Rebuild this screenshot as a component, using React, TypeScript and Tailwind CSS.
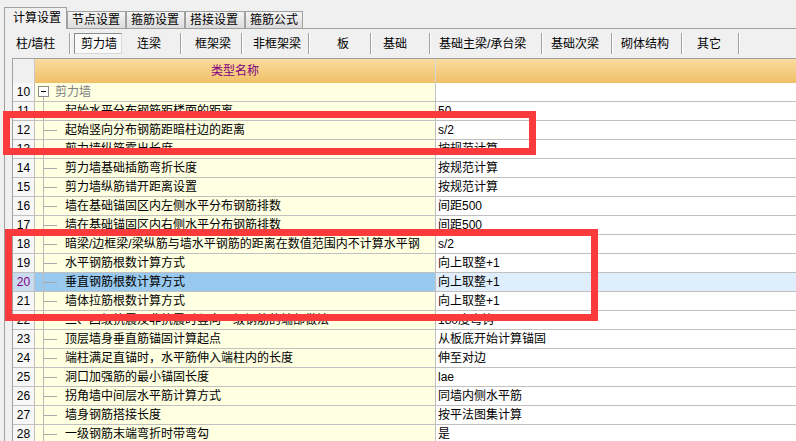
import React from "react";

const rows: { n: number; name: string; val: string }[] = [
  { n: 11, name: "起始水平分布钢筋距楼面的距离", val: "50" },
  { n: 12, name: "起始竖向分布钢筋距暗柱边的距离", val: "s/2" },
  { n: 13, name: "剪力墙纵筋露出长度", val: "按规范计算" },
  { n: 14, name: "剪力墙基础插筋弯折长度", val: "按规范计算" },
  { n: 15, name: "剪力墙纵筋错开距离设置", val: "按规范计算" },
  { n: 16, name: "墙在基础锚固区内左侧水平分布钢筋排数", val: "间距500" },
  { n: 17, name: "墙在基础锚固区内右侧水平分布钢筋排数", val: "间距500" },
  { n: 18, name: "暗梁/边框梁/梁纵筋与墙水平钢筋的距离在数值范围内不计算水平钢", val: "s/2" },
  { n: 19, name: "水平钢筋根数计算方式", val: "向上取整+1" },
  { n: 20, name: "垂直钢筋根数计算方式", val: "向上取整+1" },
  { n: 21, name: "墙体拉筋根数计算方式", val: "向上取整+1" },
  { n: 22, name: "三、四级抗震及非抗震时竖向一级钢筋的端部做法", val: "180度弯钩" },
  { n: 23, name: "顶层墙身垂直筋锚固计算起点", val: "从板底开始计算锚固" },
  { n: 24, name: "端柱满足直锚时，水平筋伸入端柱内的长度", val: "伸至对边" },
  { n: 25, name: "洞口加强筋的最小锚固长度", val: "lae" },
  { n: 26, name: "拐角墙中间层水平筋计算方式", val: "同墙内侧水平筋" },
  { n: 27, name: "墙身钢筋搭接长度", val: "按平法图集计算" },
  { n: 28, name: "一级钢筋末端弯折时带弯勾", val: "是" },
];

function Sep() {
  return <div className="h-[21px] w-[2px] shrink-0 border-l border-l-[#a0a0a0] bg-white" />;
}

function Item({ label, w, pl }: { label: string; w: string; pl: string }) {
  return <div className={`${w} ${pl} shrink-0 whitespace-nowrap`}>{label}</div>;
}

export default function App() {
  return (
    <div className="relative h-[441px] w-[796px] overflow-hidden bg-[#f0f0f0] font-['Liberation_Sans','Noto_Sans_CJK_SC',sans-serif] text-[12px] leading-none text-black">
      {/* tab strip */}
      <div className="flex h-[29px] items-end pl-[4px]">
        <div className="flex h-[22px] w-[63px] shrink-0 items-center border-x border-t border-[#a0a0a0] bg-[#f0f0f0] pb-[2px] pl-[8px]">
          计算设置
        </div>
        {[
          ["节点设置", "w-[59px]"],
          ["箍筋设置", "w-[59px]"],
          ["搭接设置", "w-[60px]"],
          ["箍筋公式", "w-[58px]"],
        ].map(([t, w]) => (
          <div
            key={t}
            className={`${w} flex h-[18px] shrink-0 items-center border border-[#a0a0a0] bg-linear-to-b from-[#f4f4f4] to-[#dcdcdc] pl-[4px]`}
          >
            {t}
          </div>
        ))}
        <div className="h-full flex-1 border-b border-[#a0a0a0]" />
      </div>

      {/* panel */}
      <div className="ml-[4px] flex flex-col border-l border-[#a0a0a0]">
        {/* sub toolbar */}
        <div className="flex h-[29px] items-center">
          <Item label="柱/墙柱" w="w-[64px]" pl="pl-[11px]" />
          <Sep />
          <div className="w-[3px] shrink-0" />
          <div className="flex h-[21px] w-[48px] shrink-0 items-center border border-[#8c8c8c] border-b-[#d8d8d8] border-r-[#d8d8d8] bg-[#f9f9f9] pl-[6px]">
            剪力墙
          </div>
          <Item label="连梁" w="w-[58px]" pl="pl-[15px]" />
          <Sep />
          <Item label="框架梁" w="w-[59px]" pl="pl-[13px]" />
          <Sep />
          <Item label="非框架梁" w="w-[65px]" pl="pl-[10px]" />
          <Sep />
          <Item label="板" w="w-[60px]" pl="pl-[27px]" />
          <Sep />
          <Item label="基础" w="w-[57px]" pl="pl-[11px]" />
          <Sep />
          <Item label="基础主梁/承台梁" w="w-[110px]" pl="pl-[8px]" />
          <Sep />
          <Item label="基础次梁" w="w-[68px]" pl="pl-[8px]" />
          <Sep />
          <Item label="砌体结构" w="w-[68px]" pl="pl-[8px]" />
          <Sep />
          <Item label="其它" w="w-[55px]" pl="pl-[14px]" />
          <Sep />
        </div>

        {/* grid */}
        <div className="ml-[7px] flex flex-col border-l border-t border-[#a0a0a0] bg-white">
          {/* header */}
          <div className="flex h-[24px]">
            <div className="w-[22px] shrink-0 border-r border-[#c8c8c8] bg-[#f0f0f0]" />
            <div className="flex w-[401px] shrink-0 items-center justify-center border-r border-[#d8d8d8] bg-linear-to-b from-[#fadb9e] to-[#f0c067] text-[#800080]">
              类型名称
            </div>
            <div className="flex-1 bg-linear-to-b from-[#fadb9e] to-[#f0c067]" />
          </div>

          {/* group row 10 */}
          <div className="flex h-[19px] border-b border-[#c0c0c0]">
            <div className="flex w-[22px] shrink-0 items-center justify-center border-r border-[#c0c0c0] bg-[#f7f7f7]">
              10
            </div>
            <div className="relative flex w-[401px] shrink-0 items-center border-r border-[#c0c0c0] bg-[#ffffe1] pl-[20px] text-[#808080]">
              <div className="absolute left-[3px] top-[3px] flex h-[11px] w-[11px] items-center justify-center border border-[#8a8a8a] bg-white">
                <div className="h-[1px] w-[5px] bg-black" />
              </div>
              <div className="absolute left-[8px] top-[14px] h-[5px] w-[1px] bg-[#b8b8b8]" />
              剪力墙
            </div>
            <div className="flex-1 bg-white" />
          </div>

          {rows.map((r) => {
            const sel = r.n === 20;
            return (
              <div key={r.n} className="flex h-[19px] border-b border-[#c0c0c0]">
                <div
                  className={`flex w-[22px] shrink-0 items-center justify-center border-r border-[#c0c0c0] ${
                    sel ? "bg-[#c9dcef] text-[#800080]" : "bg-[#f7f7f7]"
                  }`}
                >
                  {r.n}
                </div>
                <div
                  className={`relative flex w-[401px] shrink-0 items-center overflow-hidden whitespace-nowrap border-r border-[#c0c0c0] pl-[30px] ${
                    sel ? "bg-[#99c9ef]" : "bg-[#ffffe1]"
                  }`}
                >
                  <div className="absolute left-[8px] top-0 h-[19px] w-[1px] bg-[#b8b8b8]" />
                  <div className="absolute left-[9px] top-[9px] h-[1px] w-[13px] bg-[#a8a8a8]" />
                  {r.name}
                </div>
                <div
                  className={`flex flex-1 items-center whitespace-nowrap pl-[2px] ${
                    sel ? "bg-[#dfeefc]" : "bg-white"
                  }`}
                >
                  {r.val}
                </div>
              </div>
            );
          })}
        </div>
      </div>

      {/* red highlight boxes */}
      <div className="absolute left-[3px] top-[111px] h-[44px] w-[533px] border-[7px] border-[#fb3b3b]" />
      <div className="absolute left-[5px] top-[229px] h-[92px] w-[593px] border-[7px] border-[#fb3b3b]" />
    </div>
  );
}
